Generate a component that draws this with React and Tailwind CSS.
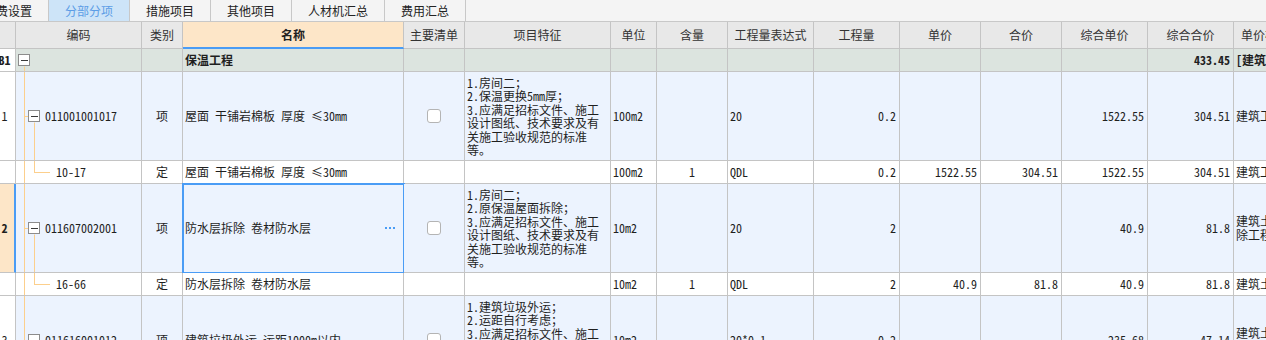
import { twMerge } from "tailwind-merge";

const FONT = "font-['Noto_Sans_Mono_CJK_SC','Noto_Sans_CJK_SC',sans-serif]";
const LINE = "#fccf8c";

const W = {
  rn: "w-[16px]",
  code: "w-[126px]",
  type: "w-[41px]",
  name: "w-[221px]",
  main: "w-[61px]",
  feat: "w-[146px]",
  unit: "w-[46px]",
  content: "w-[71px]",
  expr: "w-[86px]",
  qty: "w-[86px]",
  price: "w-[81px]",
  total: "w-[81px]",
  cprice: "w-[86px]",
  ctotal: "w-[86px]",
  file: "w-[120px]",
};

const tabs = ["取费设置", "分部分项", "措施项目", "其他项目", "人材机汇总", "费用汇总"];

const feat1 = ["1.房间二；", "2.保温更换5mm厚；", "3.应满足招标文件、施工", "设计图纸、技术要求及有", "关施工验收规范的标准", "等。"];
const feat2 = ["1.房间二；", "2.原保温屋面拆除；", "3.应满足招标文件、施工", "设计图纸、技术要求及有", "关施工验收规范的标准", "等。"];
const feat3 = ["1.建筑垃圾外运；", "2.运距自行考虑；", "3.应满足招标文件、施工", "设计图纸、技术要求及有", "关施工验收规范的标准", "等。"];

const rows = [
  {
    rn: "1", tree: "item", H: 89, code: "011001001017", kind: "项",
    name: "屋面 干铺岩棉板 厚度 ≤30mm", main: true, feat: feat1, unit: "100m2",
    content: "", expr: "20", qty: "0.2", price: "", total: "", cprice: "1522.55",
    ctotal: "304.51", file: ["建筑工程"],
  },
  {
    rn: "", tree: "sub", H: 23, code: "10-17", kind: "定",
    name: "屋面 干铺岩棉板 厚度 ≤30mm", unit: "100m2", content: "1", expr: "QDL",
    qty: "0.2", price: "1522.55", total: "304.51", cprice: "1522.55", ctotal: "304.51",
    file: ["建筑工程"],
  },
  {
    rn: "2", sel: true, tree: "item", H: 89, code: "011607002001", kind: "项",
    name: "防水层拆除 卷材防水层", main: true, feat: feat2, unit: "10m2", content: "",
    expr: "20", qty: "2", price: "", total: "", cprice: "40.9", ctotal: "81.8",
    file: ["建筑土建拆", "除工程"],
  },
  {
    rn: "", tree: "sub", H: 23, code: "16-66", kind: "定",
    name: "防水层拆除 卷材防水层", unit: "10m2", content: "1", expr: "QDL", qty: "2",
    price: "40.9", total: "81.8", cprice: "40.9", ctotal: "81.8", file: ["建筑土建拆除工程"],
  },
  {
    rn: "3", tree: "item", H: 89, code: "011616001012", kind: "项",
    name: "建筑垃圾外运 运距1000m以内", main: true, feat: feat3, unit: "10m2", content: "",
    expr: "20*0.1", qty: "0.2", price: "", total: "", cprice: "235.68", ctotal: "47.14",
    file: ["建筑土建拆", "除工程"],
  },
];

function Cell({ w, className, children }) {
  return (
    <div
      className={twMerge(
        "shrink-0 flex items-center overflow-hidden whitespace-nowrap border-r border-b border-[#c4c4c4]",
        w,
        className
      )}
    >
      {children}
    </div>
  );
}

function MinusBox({ x, cy }) {
  return (
    <>
      <rect x={x + 0.5} y={cy - 6} width="11" height="11" fill="#fff" stroke="#8c8c8c" />
      <line x1={x + 3} x2={x + 10} y1={cy} y2={cy} stroke="#3a3a3a" />
    </>
  );
}

function Tree({ kind, H }) {
  const h = H - 1;
  const cy = Math.floor(h / 2) + 0.5;
  if (kind === "root") {
    return (
      <svg width="29" height={h} className="shrink-0">
        <line x1="8.5" x2="8.5" y1={cy + 6} y2={h} stroke={LINE} />
        <MinusBox x={2} cy={cy} />
      </svg>
    );
  }
  if (kind === "item") {
    return (
      <svg width="29" height={h} className="shrink-0">
        <line x1="8.5" x2="8.5" y1="0" y2={h} stroke={LINE} />
        <line x1="8" x2="12" y1={cy} y2={cy} stroke={LINE} />
        <line x1="18.5" x2="18.5" y1={cy + 6} y2={h} stroke={LINE} />
        <MinusBox x={12} cy={cy} />
      </svg>
    );
  }
  return (
    <svg width="40" height={h} className="shrink-0">
      <line x1="8.5" x2="8.5" y1="0" y2={h} stroke={LINE} />
      <line x1="18.5" x2="18.5" y1="0" y2={cy} stroke={LINE} />
      <line x1="18" x2="34" y1={cy} y2={cy} stroke={LINE} />
    </svg>
  );
}

function RowNum({ children, bold }) {
  return (
    <div className={twMerge("w-[21px] -ml-[6px] shrink-0 text-center", bold && "font-bold")}>
      {children}
    </div>
  );
}

function Header() {
  const cols = [
    ["rn", ""], ["code", "编码"], ["type", "类别"], ["name", "名称"], ["main", "主要清单"],
    ["feat", "项目特征"], ["unit", "单位"], ["content", "含量"], ["expr", "工程量表达式"],
    ["qty", "工程量"], ["price", "单价"], ["total", "合价"], ["cprice", "综合单价"],
    ["ctotal", "综合合价"], ["file", "单价构成文件"],
  ];
  return (
    <div className="flex h-[27px] w-max bg-[#e8e8e8] text-[#333]">
      {cols.map(([k, t]) => (
        <Cell
          key={k}
          w={W[k]}
          className={twMerge(
            k === "file" ? "justify-start pl-[7px]" : "justify-center",
            k === "name" && "bg-[#fde6c8] font-bold text-[#222] border-b-2 border-b-[#4a9cf5]"
          )}
        >
          {t}
        </Cell>
      ))}
    </div>
  );
}

function GroupRow() {
  const bg = "bg-[#dce4df]";
  return (
    <div className="flex h-[23px] w-max">
      <Cell w={W.rn} className="bg-white">
        <RowNum bold>B1</RowNum>
      </Cell>
      <Cell w={W.code} className={bg}>
        <Tree kind="root" H={23} />
      </Cell>
      <Cell w={W.type} className={bg} />
      <Cell w={W.name} className={twMerge(bg, "pl-[2px] font-bold")}>保温工程</Cell>
      <Cell w={W.main} className={bg} />
      <Cell w={W.feat} className={bg} />
      <Cell w={W.unit} className={bg} />
      <Cell w={W.content} className={bg} />
      <Cell w={W.expr} className={bg} />
      <Cell w={W.qty} className={bg} />
      <Cell w={W.price} className={bg} />
      <Cell w={W.total} className={bg} />
      <Cell w={W.cprice} className={bg} />
      <Cell w={W.ctotal} className={twMerge(bg, "justify-end pr-[3px] font-bold")}>433.45</Cell>
      <Cell w={W.file} className={twMerge(bg, "pl-[2px] font-bold")}>[建筑工程]</Cell>
    </div>
  );
}

function DataRow({ r }) {
  const bg = r.kind === "项" ? "bg-[#ecf3fe]" : "bg-white";
  const num = twMerge(bg, "justify-end pr-[3px]");
  return (
    <div className={twMerge("flex w-max", r.H === 89 ? "h-[89px]" : "h-[23px]")}>
      <Cell
        w={W.rn}
        className={r.sel ? "bg-[#fde6c8] border-r-2 border-r-[#4a9cf5]" : "bg-white"}
      >
        <RowNum bold={r.sel}>{r.rn}</RowNum>
      </Cell>
      <Cell w={W.code} className={bg}>
        <Tree kind={r.tree} H={r.H} />
        <span>{r.code}</span>
      </Cell>
      <Cell w={W.type} className={twMerge(bg, "justify-center")}>{r.kind}</Cell>
      <Cell
        w={W.name}
        className={twMerge(
          bg,
          "pl-[2px] justify-between",
          r.sel && "outline-2 outline-[#4a9cf5] -outline-offset-1"
        )}
      >
        <span>{r.name}</span>
        {r.sel && (
          <span className="flex gap-[2px] mr-[8px]">
            <span className="w-[2px] h-[2px] bg-[#4a9cf5]" />
            <span className="w-[2px] h-[2px] bg-[#4a9cf5]" />
            <span className="w-[2px] h-[2px] bg-[#4a9cf5]" />
          </span>
        )}
      </Cell>
      <Cell w={W.main} className={twMerge(bg, "justify-center")}>
        {r.main && <div className="w-[14px] h-[14px] bg-white border border-[#b4b4b4] rounded-[3px]" />}
      </Cell>
      <Cell w={W.feat} className={twMerge(bg, "pl-[2px]")}>
        {r.feat && (
          <div className="leading-[13.5px]">
            {r.feat.map((l, i) => (
              <div key={i}>{l}</div>
            ))}
          </div>
        )}
      </Cell>
      <Cell w={W.unit} className={twMerge(bg, "pl-[2px]")}>{r.unit}</Cell>
      <Cell w={W.content} className={twMerge(bg, "justify-center")}>{r.content}</Cell>
      <Cell w={W.expr} className={twMerge(bg, "pl-[2px]")}>{r.expr}</Cell>
      <Cell w={W.qty} className={num}>{r.qty}</Cell>
      <Cell w={W.price} className={num}>{r.price}</Cell>
      <Cell w={W.total} className={num}>{r.total}</Cell>
      <Cell w={W.cprice} className={num}>{r.cprice}</Cell>
      <Cell w={W.ctotal} className={num}>{r.ctotal}</Cell>
      <Cell w={W.file} className={twMerge(bg, "pl-[2px]")}>
        <div className="leading-[14px]">
          {r.file.map((l, i) => (
            <div key={i}>{l}</div>
          ))}
        </div>
      </Cell>
    </div>
  );
}

export default function App() {
  return (
    <div className={twMerge("w-[1266px] h-[340px] overflow-hidden bg-white text-[12px] text-[#1f1f1f]", FONT)}>
      <div className="flex h-[22px] bg-[#f4f4f4] border-b border-[#c8c8c8] font-['Noto_Sans_CJK_SC',sans-serif] text-[#222]">
        {tabs.map((t, i) => (
          <div
            key={t}
            className={twMerge(
              "shrink-0 h-full flex items-center justify-center border-r border-[#c8c8c8] px-[16px]",
              i === 0 && "-ml-[32px]",
              i === 1 && "bg-[#cde4f8] text-[#5c9de6]"
            )}
          >
            {t}
          </div>
        ))}
      </div>
      <Header />
      <GroupRow />
      {rows.map((r, i) => (
        <DataRow key={i} r={r} />
      ))}
    </div>
  );
}
